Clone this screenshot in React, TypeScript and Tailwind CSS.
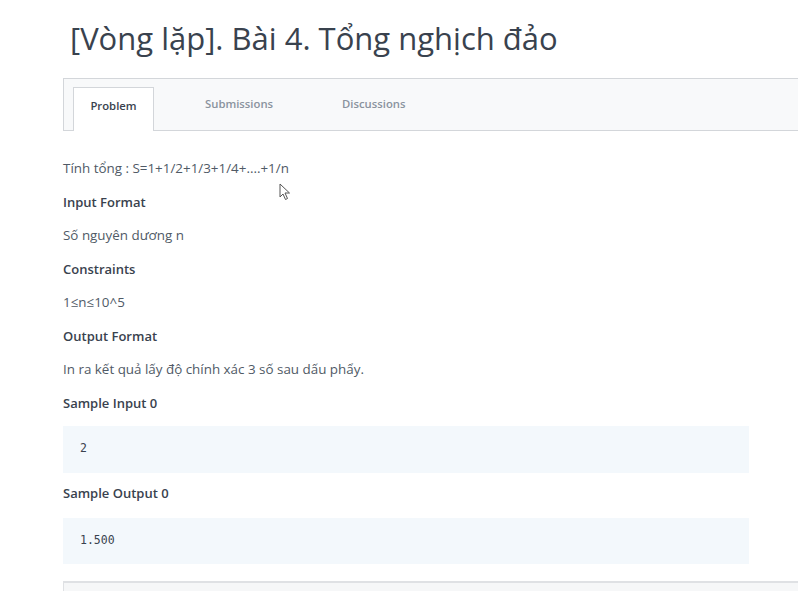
import React from "react";

const Heading: React.FC<{ children: React.ReactNode; className?: string }> = ({ children, className = "mt-[13.5px]" }) => (
  <h3 className={`text-[13px] font-semibold text-[#39424e] leading-[20px] ${className}`}>{children}</h3>
);

const Text: React.FC<{ children: React.ReactNode }> = ({ children }) => (
  <p className="mt-[13.5px] leading-[20px]">{children}</p>
);

const Sample: React.FC<{ value: string; className: string }> = ({ value, className }) => (
  <pre
    className={`bg-[#f3f8fc] mr-[49px] px-[17px] flex items-center text-[11.5px] text-[#39424e] font-['DejaVu_Sans_Mono',monospace] ${className}`}
  >
    {value}
  </pre>
);

export default function App() {
  return (
    <div className="relative w-[798px] h-[591px] overflow-hidden bg-white font-['Open_Sans',sans-serif] text-[#505a66]">
      <h1 className="pl-[70px] pt-[16px] text-[31px] leading-[44px] text-[#39424e]">
        [Vòng lặp]. Bài 4. Tổng nghịch đảo
      </h1>

      <div className="ml-[63px] mt-[18px] h-[53px] border-y border-l border-[#d3d6da] bg-[#f8f9fa] flex items-end pl-[9px] text-[11.3px] font-semibold">
        <div className="w-[81px] h-[44px] -mb-px bg-white border-x border-t border-[#d3d6da] flex items-center justify-center pb-[6px] text-[#39424e]">
          Problem
        </div>
        <div className="ml-[51px] h-[44px] flex items-center pb-[7px] text-[#8a939e]">Submissions</div>
        <div className="ml-[69px] h-[44px] flex items-center pb-[7px] text-[#8a939e]">Discussions</div>
      </div>

      <div className="pl-[63px] pt-[27px] text-[13.4px]">
        <p className="leading-[20px]">Tính tổng : S=1+1/2+1/3+1/4+....+1/n</p>
        <Heading>Input Format</Heading>
        <Text>Số nguyên dương n</Text>
        <Heading>Constraints</Heading>
        <Text>1≤n≤10^5</Text>
        <Heading>Output Format</Heading>
        <Text>In ra kết quả lấy độ chính xác 3 số sau dấu phẩy.</Text>
        <Heading>Sample Input 0</Heading>
        <Sample value="2" className="mt-[13px] h-[47px]" />
        <Heading className="mt-[10px]">Sample Output 0</Heading>
        <Sample value="1.500" className="mt-[15px] h-[46px]" />
        <div className="mt-[17px] h-[20px] border-t-2 border-l border-[#dfe1e4] bg-[#f6f7f8]" />
      </div>

      <svg className="absolute left-[279px] top-[183px]" width="12" height="18" viewBox="0 0 12 18">
        <path
          d="M1 1 L1 14 L4 11 L6.5 16.5 L8.5 15.5 L6 10 L10.5 10 Z"
          fill="white"
          stroke="#555"
          strokeWidth="1"
          strokeLinejoin="round"
        />
      </svg>
    </div>
  );
}
